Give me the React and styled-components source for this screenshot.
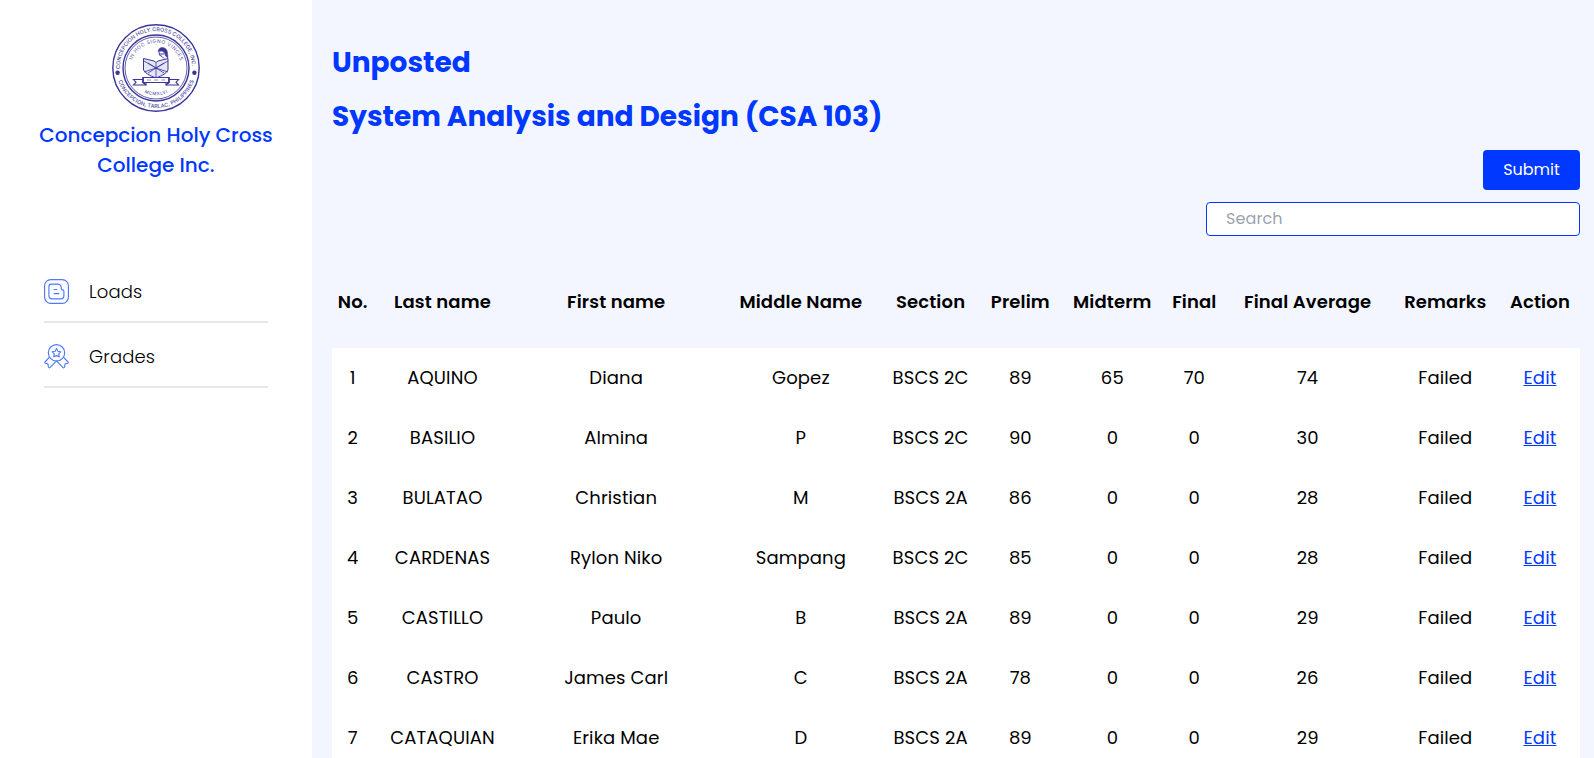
import React from "react";
import styled, { createGlobalStyle } from "styled-components";

const BLUE = "#0038ff";
const INK = "#3a3597";

const GlobalStyle = createGlobalStyle`
  *, *::before, *::after { box-sizing: border-box; }
  body {
    margin: 0;
    overflow: hidden;
    font-family: Poppins, Inter, sans-serif;
    color: #000;
    background: #f3f6ff;
  }
`;

const Page = styled.div`
  display: flex;
  height: 100vh;
  overflow: hidden;
`;

const Sidebar = styled.aside`
  width: 312px;
  flex-shrink: 0;
  padding: 24px 38px 0;
  background: #fff;
  display: flex;
  flex-direction: column;
`;

const Seal = styled.svg`
  width: 88px;
  height: 88px;
  align-self: center;
  overflow: visible;
`;

const Brand = styled.h1`
  margin: 8px 0 0;
  font-size: 20px;
  line-height: 30px;
  font-weight: 500;
  text-align: center;
  color: ${BLUE};
`;

const Nav = styled.nav`
  display: flex;
  flex-direction: column;
  margin: 78px 6px 0;
`;

const NavItem = styled.a`
  display: flex;
  align-items: center;
  gap: 20px;
  height: 65px;
  padding: 4px 0 0;
  border-bottom: 2px solid #e5e7eb;
  font-size: 18px;
  line-height: 27px;
  font-weight: 300;
  letter-spacing: 0.15px;
`;

const NavIcon = styled.svg`
  width: 25px;
  height: 25px;
  flex-shrink: 0;
  fill: none;
  stroke: #4d78ff;
  stroke-width: 1.15;
  stroke-linecap: round;
  stroke-linejoin: round;
`;

const Main = styled.main`
  flex: 1;
  min-width: 0;
  padding: 42px 14px 0 20px;
  display: flex;
  flex-direction: column;
`;

const Title = styled.h2`
  margin: 0 0 12px;
  font-size: 28px;
  line-height: 42px;
  font-weight: 700;
  color: ${BLUE};
`;

const Tools = styled.div`
  display: flex;
  flex-direction: column;
  align-items: flex-end;
  gap: 12px;
`;

const SubmitButton = styled.button`
  width: 97px;
  height: 40px;
  padding: 0;
  border: 0;
  border-radius: 4px;
  background: ${BLUE};
  color: #fff;
  font: 400 16px/24px Poppins, Inter, sans-serif;
`;

const SearchInput = styled.input`
  width: 374px;
  height: 34px;
  padding: 0 19px 2px;
  border: 1px solid ${BLUE};
  border-radius: 4px;
  background: #fff;
  font: 400 16px/24px Poppins, Inter, sans-serif;
  letter-spacing: 0.1px;
  &::placeholder { color: #9ca3af; opacity: 1; }
`;

const Table = styled.table`
  width: 1248px;
  margin-top: 20px;
  table-layout: fixed;
  border-collapse: collapse;
  font-size: 18px;
  line-height: 27px;
  text-align: center;
`;

const Column = styled.col`
  width: ${(p) => p.$width}px;
`;

const HeadCell = styled.th`
  height: 92px;
  padding: 0 0 2px;
  font-weight: 600;
  letter-spacing: 0.14px;
  white-space: nowrap;
`;

const Body = styled.tbody`
  background: #fff;
`;

const Cell = styled.td`
  height: 60px;
  padding: 0 0 2px;
  white-space: nowrap;
  letter-spacing: 0.12px;
`;

const EditLink = styled.a`
  color: ${BLUE};
  text-decoration: underline;
`;

const columns = [
  { label: "No.", width: 41.4 },
  { label: "Last name", width: 138.2 },
  { label: "First name", width: 209.2 },
  { label: "Middle Name", width: 160.2 },
  { label: "Section", width: 99.2 },
  { label: "Prelim", width: 80.4 },
  { label: "Midterm", width: 103.6 },
  { label: "Final", width: 60.4 },
  { label: "Final Average", width: 166.2 },
  { label: "Remarks", width: 109.2 },
  { label: "Action", width: 80 },
];

const students = [
  ["AQUINO", "Diana", "Gopez", "BSCS 2C", 89, 65, 70, 74],
  ["BASILIO", "Almina", "P", "BSCS 2C", 90, 0, 0, 30],
  ["BULATAO", "Christian", "M", "BSCS 2A", 86, 0, 0, 28],
  ["CARDENAS", "Rylon Niko", "Sampang", "BSCS 2C", 85, 0, 0, 28],
  ["CASTILLO", "Paulo", "B", "BSCS 2A", 89, 0, 0, 29],
  ["CASTRO", "James Carl", "C", "BSCS 2A", 78, 0, 0, 26],
  ["CATAQUIAN", "Erika Mae", "D", "BSCS 2A", 89, 0, 0, 29],
];

function CollegeSeal() {
  return (
    <Seal viewBox="-44 -44 88 88" fill="none" stroke={INK}>
      <defs>
        <path id="ring-top" d="M-36 2A36.1 36.1 0 1 1 36 2" />
        <path id="ring-bottom" d="M-38.1 12A39.9 39.9 0 0 0 38.1 12" />
        <path id="motto" d="M-24.1 -7A25.1 25.1 0 0 1 24.1 -7" />
        <path id="year" d="M-13 24A27.3 27.3 0 0 0 13 24" />
      </defs>
      <circle r="43.2" strokeWidth="1.4" />
      <circle r="33" strokeWidth="1.4" />
      <circle r="31" strokeWidth="0.8" />
      <circle cx="-38.4" cy="4.8" r="2.2" fill={INK} stroke="none" />
      <circle cx="38.4" cy="4.8" r="2.2" fill={INK} stroke="none" />
      <g fill={INK} stroke="none" fontFamily="Inter, sans-serif" fontWeight="500">
        <text fontSize="5.4" opacity="0.9">
          <textPath href="#ring-top" startOffset="1" textLength="114">CONCEPCION HOLY CROSS COLLEGE, INC.</textPath>
        </text>
        <text fontSize="5.4" opacity="0.9">
          <textPath href="#ring-bottom" startOffset="1" textLength="99">CONCEPCION, TARLAC, PHILIPPINES</textPath>
        </text>
        <text fontSize="5" opacity="0.7">
          <textPath href="#motto" startOffset="1" textLength="63">IN HOC SIGNO VINCES</textPath>
        </text>
        <text fontSize="4.4" opacity="0.85">
          <textPath href="#year" startOffset="1.5" textLength="24">MCMXLVI</textPath>
        </text>
      </g>
      <path d="M-12.5 -9.5L-2 -7L0 -5.5L2 -7L12 -9.5V2Q10 6.5 0 10Q-10 6.5 -12.5 2Z" strokeWidth="1" fill="#e4e4f2" />
      <path d="M-12 -7L0 0L12 -7M-12 4L0 0L12 4M0 -5V9.5M-8 -5L8 5M8 -5L-8 5" strokeWidth="0.8" />
      <path d="M2 -16.5Q3 -21 7 -20.5Q11.5 -19.5 11.5 -14.5L12 -10L9.5 -12Q9 -16 6 -17Z" fill={INK} strokeWidth="0.5" />
      <path d="M3 -16Q2.5 -12 6 -11.5L8 -9.5M4 -14H8" strokeWidth="1" />
      <path d="M-13 9.5H13V14.5H-13ZM-13 11.5H-22.5L-20 14.2L-22.5 17H-10V14.5M13 11.5H22.5L20 14.2L22.5 17H10V14.5" fill="#fff" strokeWidth="1.1" />
      <path d="M-9 12H-5M-2 12H2.5M5.5 12H9" strokeWidth="1" opacity="0.55" />
      <path d="M-13 9.5V14.5L-10 17M13 9.5V14.5L10 17" strokeWidth="1.6" />
    </Seal>
  );
}

function LoadsIcon() {
  return (
    <NavIcon viewBox="0 0 25 25">
      <rect x="0.6" y="0.6" width="23.8" height="23.8" rx="6.2" />
      <path d="M7.3 5.1H14Q17.2 5.4 17.2 8.6V9.5Q17.2 10.9 18.6 10.9Q19.9 11 19.9 12.4V16.6Q19.9 19.9 16.6 19.9H8.2Q4.9 19.9 4.9 16.6V7.8Q4.9 5.1 7.3 5.1Z" />
      <path d="M10 10.5H12.8M10 14.6H14.9" />
    </NavIcon>
  );
}

function GradesIcon() {
  return (
    <NavIcon viewBox="0 0 25 25">
      <circle cx="12.5" cy="8.8" r="8.2" />
      <path d="M12.5 4.6L13.9 7.2L16.8 7.7L14.8 9.9L15.2 12.8L12.5 11.6L9.8 12.8L10.2 9.9L8.2 7.7L11.1 7.2Z" />
      <path d="M5.3 13.4L1 18Q0.4 18.9 1.4 19.2L3.8 19.7L4.4 22.7Q4.9 24.6 6.2 23.4L12.5 16.9L18.8 23.4Q20.1 24.6 20.6 22.7L21.2 19.7L23.6 19.2Q24.6 18.9 24 18L19.7 13.4" />
    </NavIcon>
  );
}

export default function App() {
  return (
    <Page>
      <GlobalStyle />
      <Sidebar>
        <CollegeSeal />
        <Brand>Concepcion Holy Cross College Inc.</Brand>
        <Nav>
          <NavItem><LoadsIcon />Loads</NavItem>
          <NavItem><GradesIcon />Grades</NavItem>
        </Nav>
      </Sidebar>
      <Main>
        <Title>Unposted</Title>
        <Title>System Analysis and Design (CSA 103)</Title>
        <Tools>
          <SubmitButton>Submit</SubmitButton>
          <SearchInput placeholder="Search" />
        </Tools>
        <Table>
          <colgroup>
            {columns.map((c) => <Column key={c.label} $width={c.width} />)}
          </colgroup>
          <thead>
            <tr>
              {columns.map((c) => <HeadCell key={c.label}>{c.label}</HeadCell>)}
            </tr>
          </thead>
          <Body>
            {students.map((student, row) => (
              <tr key={student[0]}>
                {[row + 1, ...student, "Failed"].map((value, i) => (
                  <Cell key={columns[i].label}>{value}</Cell>
                ))}
                <Cell><EditLink href="#">Edit</EditLink></Cell>
              </tr>
            ))}
          </Body>
        </Table>
      </Main>
    </Page>
  );
}
